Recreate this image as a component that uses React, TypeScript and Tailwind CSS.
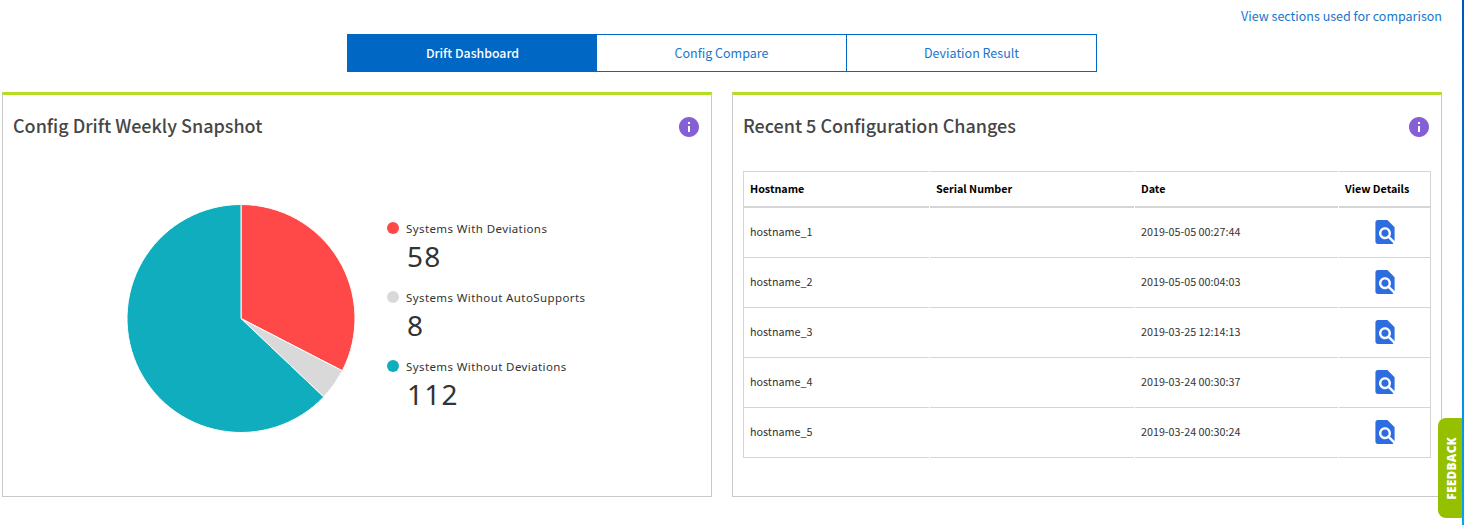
import React from "react";

const SANS = "font-['Noto_Sans_CJK_SC','Noto_Sans',sans-serif]";

const tabs = ["Drift Dashboard", "Config Compare", "Deviation Result"];

const legend = [
  { label: "Systems With Deviations", value: 58, dot: "bg-[#ff4848]", fill: "#ff4848" },
  { label: "Systems Without AutoSupports", value: 8, dot: "bg-[#d9d9d9]", fill: "#d9d9d9" },
  { label: "Systems Without Deviations", value: 112, dot: "bg-[#0fadbe]", fill: "#0fadbe" },
];

const rows = [
  ["hostname_1", "2019-05-05 00:27:44"],
  ["hostname_2", "2019-05-05 00:04:03"],
  ["hostname_3", "2019-03-25 12:14:13"],
  ["hostname_4", "2019-03-24 00:30:37"],
  ["hostname_5", "2019-03-24 00:30:24"],
];

function InfoIcon() {
  return (
    <svg viewBox="0 0 24 24" className="size-6 shrink-0" fill="#8460d4">
      <path d="M12 2C6.48 2 2 6.48 2 12s4.48 10 10 10 10-4.48 10-10S17.52 2 12 2zm1 15h-2v-6h2v6zm0-8h-2V7h2v2z" />
    </svg>
  );
}

function FindIcon() {
  return (
    <svg viewBox="-0.5 -0.5 25 25" className="mb-px ml-px h-[30px] w-[30px]" fill="#2d6de0">
      <path d="M20 19.59V8l-6-6H6c-1.1 0-1.99.9-1.99 2L4 20c0 1.1.89 2 1.99 2H18c.45 0 .85-.15 1.19-.4l-4.43-4.43c-.8.52-1.74.83-2.76.83-2.76 0-5-2.24-5-5s2.24-5 5-5 5 2.24 5 5c0 1.02-.31 1.96-.83 2.75L20 19.59zM9 13c0 1.66 1.34 3 3 3s3-1.34 3-3-1.34-3-3-3-3 1.34-3 3z" />
    </svg>
  );
}

function Pie() {
  const total = legend.reduce((sum, item) => sum + item.value, 0);
  const point = (n: number) => {
    const a = (n / total) * 2 * Math.PI;
    return `${115 + 114 * Math.sin(a)} ${115 - 114 * Math.cos(a)}`;
  };
  let start = 0;
  return (
    <svg viewBox="0 0.5 230 230" className="h-[230px] w-[230px] shrink-0">
      {legend.map((item) => {
        const from = start;
        start += item.value;
        const large = item.value / total > 0.5 ? 1 : 0;
        return (
          <path
            key={item.label}
            d={`M115 115L${point(from)}A114 114 0 ${large} 1 ${point(start)}Z`}
            fill={item.fill}
            stroke="#fff"
            strokeWidth="1"
            strokeLinejoin="round"
          />
        );
      })}
    </svg>
  );
}

function Panel({ title, children }: { title: string; children: React.ReactNode }) {
  return (
    <section className="h-[405px] w-[710px] border border-t-[3px] border-[#c9c9c9] border-t-[#b4dd24] bg-white">
      <header className="flex h-16 items-center justify-between pr-[10px] pl-[10px]">
        <h2 className="pb-1 text-[17.98px] leading-6 font-medium text-[#464646]">{title}</h2>
        <InfoIcon />
      </header>
      {children}
    </section>
  );
}

const grid = "grid grid-cols-[186px_204px_203px_92px] gap-x-px";
const line = "border-[#d5d5d5]";

export default function App() {
  return (
    <div className={`flex h-[525px] w-[1464px] overflow-hidden bg-white ${SANS}`}>
      <main className="w-[1462px] pl-0.5">
        <div className="flex h-[34px] w-[1440px] items-center justify-end pb-0.5 text-[12.53px] leading-4 text-[#1976cc]">
          <a>View sections used for comparison</a>
        </div>
        <nav className="ml-[345px] flex h-[38px] w-[750px] border border-[#0067c5] text-[12.5px]">
          {tabs.map((tab, i) => (
            <button
              key={tab}
              className={
                i === 0
                  ? "w-[249px] bg-[#0067c5] text-[12.3px] font-medium text-white"
                  : i === 1
                    ? "w-[249px] text-[#1976cc]"
                    : "w-[250px] border-l border-[#0067c5] text-[#1976cc]"
              }
            >
              {tab}
            </button>
          ))}
        </nav>
        <div className="mt-5 flex gap-5">
          <Panel title="Config Drift Weekly Snapshot">
            <div className="flex pt-[45px] pl-[123px]">
              <Pie />
              <ul className="ml-[31px] pt-[14px] font-['Noto_Sans',sans-serif]">
                {legend.map((item) => (
                  <li key={item.label} className="h-[69px]">
                    <div className="flex h-5 items-center gap-[7px] text-[11.5px] leading-5 tracking-[0.4px] text-[#333]">
                      <span className={`size-3 rounded-full ${item.dot}`} />
                      <span className="pt-px">{item.label}</span>
                    </div>
                    <div className="pl-5 text-[28px] leading-[36px] tracking-[1.2px] text-[#333]">
                      {item.value}
                    </div>
                  </li>
                ))}
              </ul>
            </div>
          </Panel>
          <Panel title="Recent 5 Configuration Changes">
            <div className="mt-3 ml-[10px] w-[688px] text-[10.75px] leading-4">
              <div className={`${grid} h-[37px] font-bold text-black`}>
                <div className={`flex items-center border-t border-b-2 border-l pb-px pl-1.5 ${line}`}>Hostname</div>
                <div className={`flex items-center border-t border-b-2 pb-px pl-1.5 ${line}`}>Serial Number</div>
                <div className={`flex items-center border-t border-b-2 pb-px pl-1.5 ${line}`}>Date</div>
                <div className={`flex items-center border-t border-r border-b-2 pb-px pl-1.5 ${line}`}>View Details</div>
              </div>
              {rows.map(([host, date]) => (
                <div key={host} className={`${grid} h-[50px] text-[#333]`}>
                  <div className={`flex items-center border-b border-l pb-0.5 pl-1.5 ${line}`}>{host}</div>
                  <div className={`border-b ${line}`} />
                  <div className={`flex items-center border-b pb-0.5 pl-1.5 ${line}`}>{date}</div>
                  <div className={`flex items-center justify-center border-r border-b ${line}`}>
                    <FindIcon />
                  </div>
                </div>
              ))}
            </div>
          </Panel>
        </div>
      </main>
      <div className="w-0.5 bg-linear-to-b from-[#0056b8] to-[#00a8ee]" />
      <button className="absolute top-[418px] left-[1438px] flex h-[100px] w-6 items-center justify-center rounded-l-lg bg-[#94c000] pl-[3px] font-['Open_Sans',sans-serif] text-[11.8px] font-extrabold tracking-[0.3px] text-white">
        <span className="rotate-180 [writing-mode:vertical-rl]">FEEDBACK</span>
      </button>
    </div>
  );
}
